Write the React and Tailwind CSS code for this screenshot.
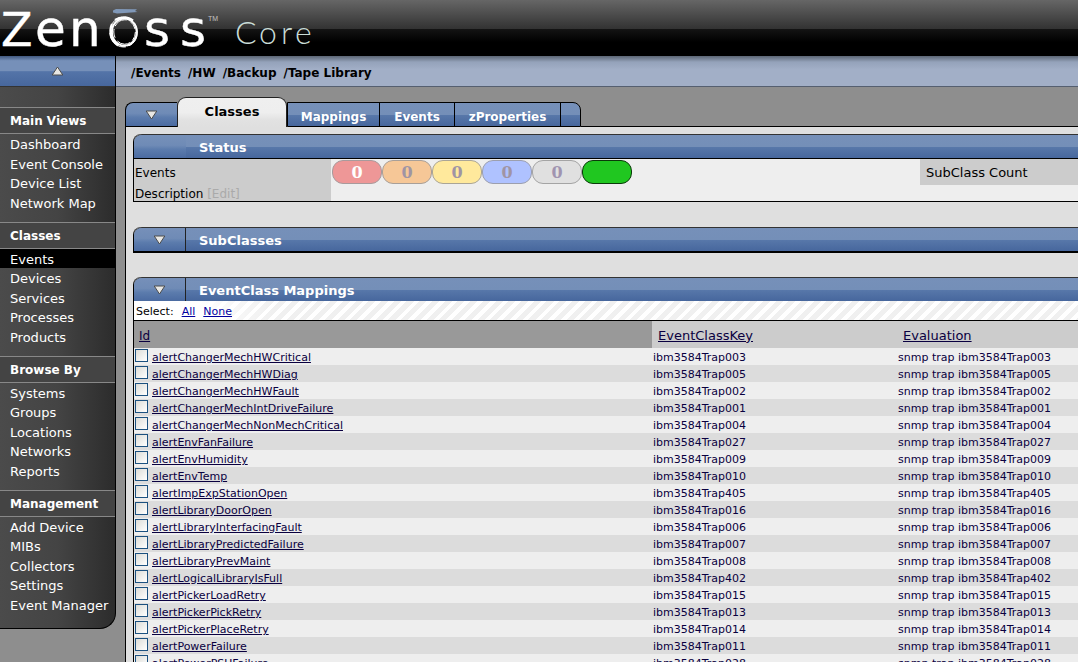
import React from "react";

const groups = [
  { title: "Main Views", items: ["Dashboard", "Event Console", "Device List", "Network Map"] },
  { title: "Classes", items: ["Events", "Devices", "Services", "Processes", "Products"] },
  { title: "Browse By", items: ["Systems", "Groups", "Locations", "Networks", "Reports"] },
  { title: "Management", items: ["Add Device", "MIBs", "Collectors", "Settings", "Event Manager"] },
];

const crumbs = ["/Events", "/HW", "/Backup", "/Tape Library"];

const mappings = [
  ["alertChangerMechHWCritical", "003"],
  ["alertChangerMechHWDiag", "005"],
  ["alertChangerMechHWFault", "002"],
  ["alertChangerMechIntDriveFailure", "001"],
  ["alertChangerMechNonMechCritical", "004"],
  ["alertEnvFanFailure", "027"],
  ["alertEnvHumidity", "009"],
  ["alertEnvTemp", "010"],
  ["alertImpExpStationOpen", "405"],
  ["alertLibraryDoorOpen", "016"],
  ["alertLibraryInterfacingFault", "006"],
  ["alertLibraryPredictedFailure", "007"],
  ["alertLibraryPrevMaint", "008"],
  ["alertLogicalLibraryIsFull", "402"],
  ["alertPickerLoadRetry", "015"],
  ["alertPickerPickRetry", "013"],
  ["alertPickerPlaceRetry", "014"],
  ["alertPowerFailure", "011"],
  ["alertPowerPSUFailure", "028"],
];

const severities = [
  { name: "Critical", count: "0", style: "border-[#a89a9c] bg-[#ee9797] text-white" },
  { name: "Error", count: "0", style: "border-[#a89f98] bg-[#f6c797] text-[#a094a4]" },
  { name: "Warning", count: "0", style: "border-[#aaa596] bg-[#ffe99c] text-[#a094a4]" },
  { name: "Info", count: "0", style: "border-[#9c9fae] bg-[#afc2ff] text-[#a094a4]" },
  { name: "Debug", count: "0", style: "border-[#a4a4a4] bg-[#e0e0e0] text-[#a094b0]" },
  { name: "Clear", count: "", style: "border-[#0a3a0a] bg-[#20c720]" },
];

const blue = "bg-[linear-gradient(#7690b9_0%,#748fb8_50%,#5878aa_51%,#47679d_100%)]";
const sheen = "bg-[linear-gradient(#7690b9_0%,#6f8bb6_45%,#5c7cad_62%,#4b6ba1_100%)]";

function Arrow({ up = false }) {
  return (
    <svg width="13" height="10" viewBox="0 0 13 10" aria-hidden="true">
      <path
        d={up ? "M6.5 1 L11.8 9 H1.2 Z" : "M1.2 1 H11.8 L6.5 9 Z"}
        fill="#e9e8e4"
        stroke="#4c4c4c"
        strokeWidth="1"
      />
    </svg>
  );
}

function Logo() {
  return (
    <svg width="320" height="56" viewBox="0 0 320 56" role="img" aria-label="Zenoss Core">
      <g className="font-['DejaVu_Sans',sans-serif]" fill="#fff" stroke="#fff" strokeWidth="0.4">
        <text x="1" y="46" fontSize="46">Z</text>
        <text x="35 69" y="46" fontSize="50">en</text>
        <text x="144 180" y="46" fontSize="50">ss</text>
      </g>
      <g fill="none" stroke="#fff">
        <ellipse cx="124.3" cy="32" rx="12.4" ry="13.6" strokeWidth="2" />
        <ellipse cx="123.6" cy="32" rx="13.8" ry="15" strokeWidth="1" strokeDasharray="17 3 9 2 13 5" />
        <ellipse cx="124.6" cy="32" rx="10.8" ry="12.2" strokeWidth="1" strokeDasharray="9 3 14 4" />
        <path d="M112 24 C108.5 32 111 41 118 45.5 M115 20 C120 16.5 128 16 133 20.5" strokeWidth="2.2" />
        <path d="M111 37 C114 45 124 49 132 44" strokeWidth="1.2" strokeDasharray="5 1.5" />
      </g>
      <path d="M113 10.5 L116 9 L137 9.3 L135 11 L137.5 12 L128 12.8 L117 13.5 L113 12.5 Z" fill="#8098b8" />
      <text x="208" y="21" fontSize="7" fill="#c2c2c2" className="font-['Liberation_Sans',sans-serif]">TM</text>
      <text x="235 259 281 295" y="44" fontSize="32" fill="#c9dcd7" className="font-['Lato','Open_Sans',sans-serif] font-light">Core</text>
    </svg>
  );
}

function PanelTitle({ children, menu = true }) {
  return (
    <div className={`flex h-6 rounded-tl-lg border-t border-[#333] ${blue}`}>
      {menu ? (
        <button
          aria-label={`${children} menu`}
          className={`flex w-[52px] shrink-0 items-center justify-center rounded-tl-lg border-r border-[#222] pt-px ${sheen}`}
        >
          <Arrow />
        </button>
      ) : (
        <span className={`w-[52px] shrink-0 rounded-tl-lg ${sheen}`} />
      )}
      <h2 className="pl-[13px] text-[13px] font-bold leading-[25px] text-white">{children}</h2>
    </div>
  );
}

export default function App() {
  return (
    <div className="h-screen overflow-hidden bg-[#8e8e8e] font-['Verdana','DejaVu_Sans',sans-serif] text-black">
      <header className="h-14 bg-[linear-gradient(#666_0%,#333_51%,#141414_52%,#000_75%)]">
        <Logo />
      </header>

      <div className="flex items-start">
        <nav className="w-[116px] shrink-0 rounded-br-[16px] border-b border-r border-black bg-[linear-gradient(90deg,#4b4b4b_0%,#444_50%,#2c2c2c_100%)] pb-[14px] text-[13px] text-white">
          <button
            aria-label="Collapse navigation"
            className="flex h-[30px] w-full items-center justify-center bg-[linear-gradient(#41597f_0%,#7690b9_16%,#7690b9_50%,#5474a8_52%,#47679d_100%)]"
          >
            <Arrow up />
          </button>
          <div className="h-[21px] border-t border-[#333]" />
          {groups.map((g) => (
            <section key={g.title} className="pb-[10px] last:pb-0">
              <h2 className="h-[27px] border-y border-[#888] bg-[#444] pl-[10px] text-[12px] font-bold leading-[27px]">{g.title}</h2>
              <ul className={`flex flex-col ${g.items.length === 4 ? "h-[78px]" : "h-[97px]"}`}>
                {g.items.map((item) => (
                  <li key={item} className={`min-h-0 flex-1 pl-[10px] leading-[21px] ${item === "Events" ? "bg-black" : ""}`}>
                    <a href="#" className="block whitespace-nowrap">{item}</a>
                  </li>
                ))}
              </ul>
            </section>
          ))}
        </nav>

        <main className="min-w-0 flex-1">
          <div className="flex h-[31px] gap-[7px] border-b border-[#555f70] bg-[linear-gradient(#5c6675_0%,#94a2ba_20%,#a2afc7_45%)] pl-[15px] text-[12px] font-bold leading-[34px]">
            {crumbs.map((c) => (
              <a key={c} href="#">{c}</a>
            ))}
          </div>

          <div className="pl-[9px] pt-[10px]">
            <div className="flex items-end">
              <button
                aria-label="Page menu"
                className={`flex h-[25px] w-[52px] items-center justify-center rounded-tl-lg border border-r-0 border-black ${sheen}`}
              >
                <Arrow />
              </button>
              <a
                href="#"
                className="flex h-[30px] w-[110px] justify-center rounded-t-[9px] border border-b-0 border-[#222] bg-[linear-gradient(#efefef_0%,#eee_50%,#e2e2e2_75%,#dfdfdf_100%)] text-[13px] font-bold leading-7"
              >
                Classes
              </a>
              <div className={`flex h-[25px] rounded-tr-lg border border-black text-[12px] font-bold leading-[28px] text-white ${blue}`}>
                <a href="#" className="w-[92px] border-r border-black text-center">Mappings</a>
                <a href="#" className="w-[75px] border-r border-black text-center">Events</a>
                <a href="#" className="w-[106px] border-r border-black text-center">zProperties</a>
                <span className="w-[19px]" />
              </div>
              <div className="h-px flex-1 bg-black" />
            </div>

            <div className="border-l border-black bg-[#dfdfdf] pl-[7px] pt-[7px]">
              <section className="rounded-tl-lg border-b border-l border-black">
                <PanelTitle menu={false}>Status</PanelTitle>
                <div className="flex border-t border-black bg-[#eee] text-[12px]">
                  <div className="w-[197px] shrink-0 bg-[#ccc] pl-px">
                    <div className="h-[26px] leading-7">Events</div>
                    <div className="h-4 leading-[19px]">
                      Description <a href="#" className="text-[#aaa]">[Edit]</a>
                    </div>
                  </div>
                  <div className="flex flex-1 items-start pl-px pt-px">
                    {severities.map((s) => (
                      <span
                        key={s.name}
                        aria-label={s.name}
                        className={`flex h-6 w-[50px] items-center justify-center rounded-[11px] border pt-px font-['DejaVu_Serif','Liberation_Serif',serif] text-[16px] font-bold ${s.style}`}
                      >
                        {s.count}
                      </span>
                    ))}
                  </div>
                  <div className="h-[26px] w-[158px] shrink-0 bg-[#ccc] pl-[6px] text-[13px] leading-7">SubClass Count</div>
                </div>
              </section>

              <section className="mt-[25px] rounded-tl-lg border-b-2 border-l border-black">
                <PanelTitle>SubClasses</PanelTitle>
              </section>

              <section className="mt-6 rounded-tl-lg border-l border-black">
                <PanelTitle>EventClass Mappings</PanelTitle>
                <div className="flex h-5 gap-2 border-b border-black bg-[linear-gradient(90deg,#fff_0%,#fff_60px,transparent_140px),repeating-linear-gradient(135deg,#fff_0px,#fff_4px,#f0f0f0_4px,#f0f0f0_9px)] pl-[2px] text-[11px] leading-[21px]">
                  <span>Select:</span>
                  <a href="#" className="text-[#0000a0] underline">All</a>
                  <a href="#" className="text-[#0000a0] underline">None</a>
                </div>
                <table className="w-full table-fixed border-collapse text-left text-[11px] text-[#0a0040]">
                  <colgroup>
                    <col className="w-[518px]" />
                    <col className="w-[245px]" />
                    <col />
                  </colgroup>
                  <thead>
                    <tr className="h-[27px] bg-[#ccc] text-[13px]">
                      <th className="bg-[#999] p-0 pl-[5px] pt-[2px] font-normal"><a href="#" className="text-[12px] underline">Id</a></th>
                      <th className="p-0 pl-[6px] pt-[2px] font-normal"><a href="#" className="underline">EventClassKey</a></th>
                      <th className="p-0 pl-[6px] pt-[2px] font-normal"><a href="#" className="underline">Evaluation</a></th>
                    </tr>
                  </thead>
                  <tbody>
                    {mappings.map(([id, n]) => (
                      <tr key={id} className="h-[17px] odd:bg-[#eee] even:bg-[#dcdcdc]">
                        <td className="p-0">
                          <div className="flex h-[17px] gap-1 pl-px">
                            <input
                              id={id}
                              type="checkbox"
                              aria-label={id}
                              className="mt-px size-[13px] shrink-0 appearance-none border border-[#1c5180] bg-[linear-gradient(135deg,#dcdcd7,#fff)]"
                            />
                            <a href="#" className="leading-5 underline">{id}</a>
                          </div>
                        </td>
                        <td className="p-0 pl-px pt-[2px] leading-[15px]">ibm3584Trap{n}</td>
                        <td className="p-0 pl-px pt-[2px] leading-[15px]">snmp trap ibm3584Trap{n}</td>
                      </tr>
                    ))}
                  </tbody>
                </table>
              </section>
            </div>
          </div>
        </main>
      </div>
    </div>
  );
}
